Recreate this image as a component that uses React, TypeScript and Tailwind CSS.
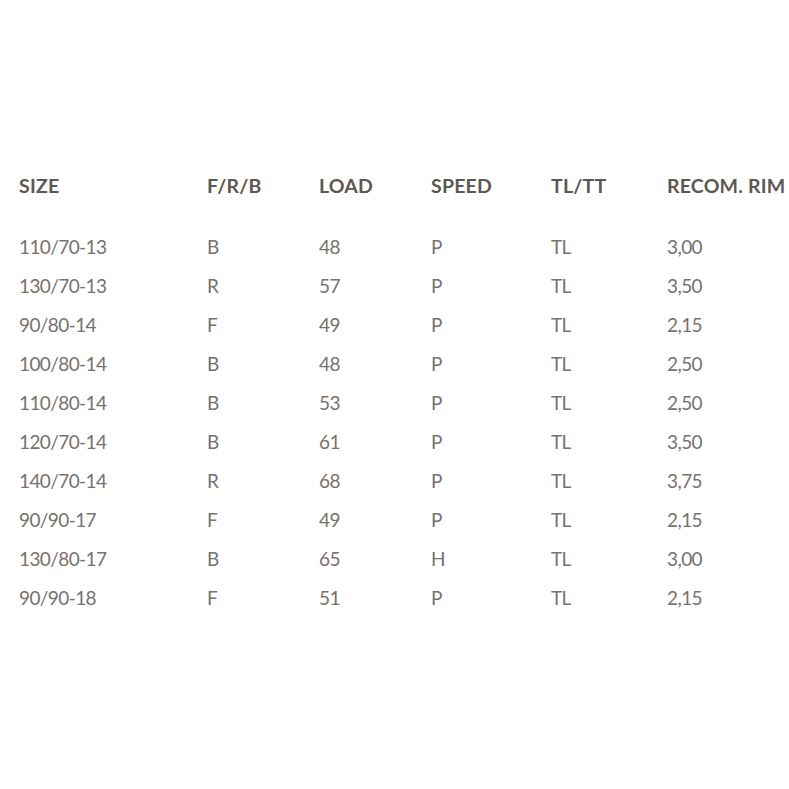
const header = ["SIZE", "F/R/B", "LOAD", "SPEED", "TL/TT", "RECOM. RIM"];

const rows = [
  ["110/70-13", "B", "48", "P", "TL", "3,00"],
  ["130/70-13", "R", "57", "P", "TL", "3,50"],
  ["90/80-14", "F", "49", "P", "TL", "2,15"],
  ["100/80-14", "B", "48", "P", "TL", "2,50"],
  ["110/80-14", "B", "53", "P", "TL", "2,50"],
  ["120/70-14", "B", "61", "P", "TL", "3,50"],
  ["140/70-14", "R", "68", "P", "TL", "3,75"],
  ["90/90-17", "F", "49", "P", "TL", "2,15"],
  ["130/80-17", "B", "65", "H", "TL", "3,00"],
  ["90/90-18", "F", "51", "P", "TL", "2,15"],
];

const cols = "grid grid-cols-[188px_112px_112px_120px_116px_1fr]";

export default function App() {
  return (
    <div
      className="w-[789px] h-[789px] bg-white pl-[19px] pt-[171px]"
      style={{ fontFamily: "Lato, 'Noto Sans', sans-serif" }}
    >
      <div className={`${cols} h-[28px] items-center text-[19.5px] font-bold tracking-[0.2px] text-[#5d5853]`}>
        {header.map((h) => (
          <div key={h}>{h}</div>
        ))}
      </div>
      <div className="mt-[29px]">
        {rows.map((r) => (
          <div key={r[0]} className={`${cols} h-[39px] items-center text-[19px] tracking-[-0.6px] text-[#77726d]`}>
            {r.map((c, i) => (
              <div key={i}>{c}</div>
            ))}
          </div>
        ))}
      </div>
    </div>
  );
}
